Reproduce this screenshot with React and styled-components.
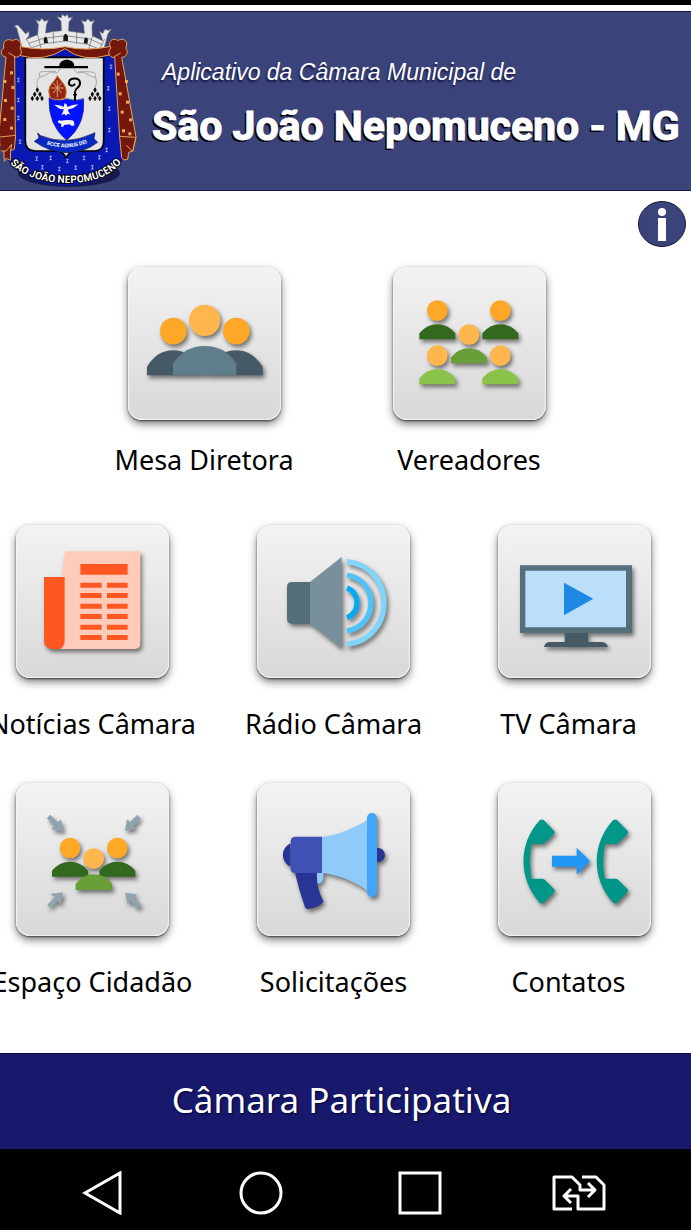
import React from 'react'
import styled, { createGlobalStyle } from 'styled-components'

const GlobalStyle = createGlobalStyle`
  * {
    box-sizing: border-box;
  }

  body {
    margin: 0;
    background: #fff;
    font-family: 'Noto Sans', 'Open Sans', sans-serif;
  }
`

const Screen = styled.div`
  min-height: 100vh;
  display: flex;
  flex-direction: column;
  overflow-x: hidden;
`

const StatusBar = styled.div`
  height: 5px;
  background: #000;
`

const Header = styled.header`
  display: flex;
  align-items: flex-start;
  gap: 12px;
  margin-top: 6px;
  background: #3b437b;
  border-top: 1px solid #14173f;
  border-bottom: 1px solid #14173f;
  overflow: hidden;
`

const CrestSvg = styled.svg`
  flex: none;
  width: 140px;
  height: 178px;
`

const Titles = styled.div`
  padding-top: 46px;
  color: #fff;
  white-space: nowrap;
  font-family: 'Liberation Sans', Arial, sans-serif;
`

const Subtitle = styled.p`
  margin: 0 0 0 10px;
  font-size: 23px;
  line-height: 28px;
  font-style: italic;
  text-shadow: -1px 2px 2px #14173f;
`

const Title = styled.h1`
  margin: 0;
  font-family: Roboto, 'Liberation Sans', sans-serif;
  font-size: 41px;
  line-height: 80px;
  font-weight: 700;
  -webkit-text-stroke: 1px #fff;
  text-shadow: -2px 2px 0 #000;
`

const Main = styled.main`
  flex: 1;
  padding-top: 10px;
`

const InfoButton = styled.button`
  display: block;
  width: 48px;
  height: 46px;
  margin: 0 5px 20px auto;
  padding: 0;
  border: 0;
  background: none;
  cursor: pointer;

  svg {
    display: block;
  }
`

const Label = styled.span`
  font-size: 27px;
  line-height: 36px;
  white-space: nowrap;
`

const Row = styled.div`
  display: flex;
  justify-content: ${({ $top }) => ($top ? 'center' : 'space-between')};
  gap: ${({ $top }) => ($top ? '112px' : '0')};
  padding: ${({ $top }) => ($top ? '0 18px 6px 0' : '0 40px 0 16px')};
  margin-bottom: 41px;

  & > :nth-child(3) ${Label} {
    padding-right: 12px;
  }
`

const Item = styled.button`
  display: flex;
  flex-direction: column;
  align-items: center;
  gap: ${({ $tight }) => ($tight ? '22px' : '28px')};
  width: 153px;
  padding: 0;
  border: 0;
  background: none;
  color: #000;
  font-family: inherit;
  cursor: pointer;
`

const Tile = styled.span`
  display: block;
  width: 153px;
  height: 153px;
  border-radius: 14px;
  background: linear-gradient(#f3f3f3, #d8d8d8);
  box-shadow: inset 0 0 1px 1px #f4f4f4, 0 1px 2px rgba(0, 0, 0, 0.6), 0 4px 8px rgba(0, 0, 0, 0.5);

  svg {
    display: block;
    width: 100%;
    height: 100%;
    filter: drop-shadow(2px 3px 2px rgba(0, 0, 0, 0.5));
  }
`

const Participate = styled.button`
  height: 96px;
  padding: 0 8px 4px 0;
  border: 0;
  border-top: 1px solid #08083a;
  background: #18186d;
  color: #fff;
  font-family: inherit;
  font-size: 35px;
  text-shadow: 1px 1px 2px #000030;
  cursor: pointer;
`

const NavBar = styled.nav`
  display: grid;
  grid-template-columns: repeat(4, 1fr);
  align-items: center;
  height: 81px;
  padding: 6px 32px 0 22px;
  background: #000;
`

const NavButton = styled.button`
  display: grid;
  place-items: center;
  padding: 0;
  border: 0;
  background: none;
  cursor: pointer;

  svg {
    fill: none;
    stroke: #fff;
    stroke-width: 3;
  }
`

const Bust = ({ x, y, head, body }) => (
  <g transform={`translate(${x} ${y})`}>
    <circle cy='31' r='31' fill={head} />
    <path d='M-54 117v-18Q-32 72 0 72t54 27v18z' fill={body} />
  </g>
)

const MesaIcon = () => (
  <svg viewBox='85 50 459 459'>
    <path d='M142 375v-26q30-49 79-49t79 49v26z' fill='#455a64' />
    <path d='M330 375v-26q30-49 79-49t80 49v26z' fill='#455a64' />
    <path d='M220 375v-36q35-52 95-52t95 52v36z' fill='#607d8b' />
    <circle cx='221' cy='242' r='40' fill='#ffa726' />
    <circle cx='410' cy='242' r='40' fill='#ffa726' />
    <circle cx='315' cy='210' r='47' fill='#ffb74d' />
  </svg>
)

const VereadoresIcon = () => (
  <svg viewBox='39 50 459 459'>
    <Bust x={172} y={150} head='#ffa726' body='#33691e' />
    <Bust x={361} y={150} head='#ffa726' body='#33691e' />
    <Bust x={172} y={285} head='#ffb74d' body='#8bc34a' />
    <Bust x={361} y={285} head='#ffb74d' body='#8bc34a' />
    <Bust x={267} y={222} head='#ffb74d' body='#689f38' />
  </svg>
)

const NoticiasIcon = () => (
  <svg viewBox='48 46 459 459'>
    <path d='M195 125h226v276q0 17-17 17H160z' fill='#ffccbc' />
    <path d='M132 202h62v190q0 18-13 26h-27q-22-3-22-24z' fill='#ff5722' />
    <path d='M241 163h142v32H241z' fill='#ff5722' />
    {[219, 250, 282, 313, 345, 376].map(y => (
      <path key={y} d={`M241 ${y}h64v15h-64zM321 ${y}h62v15h-62z`} fill='#ff5722' />
    ))}
  </svg>
)

const RadioIcon = () => (
  <svg viewBox='51 46 459 459'>
    <path d='M210 217h-54q-15 0-15 14v97q0 14 15 14h54z' fill='#546e7a' />
    <path d='M210 217l95-75v274l-95-74z' fill='#78909c' />
    <g fill='none' strokeWidth='16'>
      <path d='M321 235c40 15 40 74 0 89' stroke='#03a9f4' />
      <path d='M321 196c96 18 96 150 0 168' stroke='#4fc3f7' />
      <path d='M321 156c148 18 148 229 0 248' stroke='#81d4fa' />
    </g>
  </svg>
)

const TvIcon = () => (
  <svg viewBox='54 47 459 459'>
    <path d='M254 370h70v28h42q14 1 18 15H192q3-14 15-15h47z' fill='#455a64' />
    <path d='M120 168h336v203H120z' fill='#546e7a' />
    <path d='M136 184h302v170H136' fill='#bbdefb' />
    <path d='M252 220v98l88-50z' fill='#1e88e5' />
  </svg>
)

const EspacoIcon = () => (
  <svg viewBox='48 40 459 459'>
    <Bust x={210} y={204} head='#ffa726' body='#33691e' />
    <Bust x={352} y={204} head='#ffa726' body='#33691e' />
    <path d='M227 361v-19q22-28 54-28t55 28v19z' fill='#689f38' />
    <circle cx='281' cy='267' r='31' fill='#ffb74d' />
    <g fill='#90a4ae'>
      <path d='M150 135l24 23 9-9 7 37-37-8 10-9-22-23z' />
      <path d='M412 135l-22 22-9-9-6 35 34-5-9-9 22-22z' />
      <path d='M142 405l23-23-15-9 39-5-7 36-10-10-22 20z' />
      <path d='M375 369l36 5-9 10 22 22-11 11-22-22-8 9z' />
    </g>
  </svg>
)

const SolicitacoesIcon = () => (
  <svg viewBox='51 40 459 459'>
    <path d='M152 221v70c-31-14-31-56 0-70zM410 234c33 0 33 44 0 44z' fill='#283593' />
    <path d='M230 309h20v17q0 14-18 17z' fill='#90caf9' />
    <path d='M165 309h66q-3 44 19 86-8 19-48 23-5 0-7-5-19-54-30-104z' fill='#283593' />
    <path d='M246 201h-80q-14 0-14 14v83q0 12 14 12h80z' fill='#3f51b5' />
    <path d='M246 201c38 0 102-29 136-50v212c-46-33-98-50-136-53z' fill='#90caf9' />
    <rect x='381' y='130' width='30' height='252' rx='15' fill='#42a5f5' />
  </svg>
)

const handset = 'M191 151c-3-3-9-2-12 1-65 70-65 176 1 248 3 2 8 2 11-1l31-31c3-3 3-7 0-10l-27-27q-4-4-9-4h-31c-7-33-7-71 0-104h31q6 0 9-4l27-26c3-3 3-7 0-10z'

const ContatosIcon = () => (
  <svg viewBox='54 40 459 459'>
    <path d={handset} fill='#009688' />
    <path d={handset} fill='#009688' transform='translate(220 0)' />
    <path d='M216 258h74v-24l40 40-40 41v-24h-74z' fill='#2196f3' />
  </svg>
)

const stars = [
  [55, 240], [55, 300], [55, 354], [60, 425], [110, 476], [152, 474], [127, 502], [178, 507],
  [202, 483], [227, 503], [252, 474], [277, 502], [298, 472], [320, 450], [328, 326], [328, 390], [333, 200], [325, 265]
]

const Crest = () => (
  <CrestSvg viewBox='0 36 420 534' role='img' aria-label='São João Nepomuceno'>
    <defs>
      <path id='ribbon' d='M32 492Q86 546 196 549T363 490' />
    </defs>
    <ellipse cx='207' cy='520' rx='153' ry='40' fill='#171b4c' />
    <g fill='#e8e8e8' stroke='#62656d' strokeWidth='2'>
      <path d='M70 157L50 84l-8-6 11-3 8 8 16 18 10-7v13l-8 11q16-8 34-14l2-31-9-14 12 5 8-9 7 9 12-5-6 18-2 22q21-6 47-7l-1-28-13-14 14 3 2-10 9 6 8-6 3 11 13-3-12 15-1 27 47 7-2-24-7-15 12 4 8-9 8 9 12-5-8 15 1 32 31 15-5-16-5-12 11 6 5-12 11 3 10-4-11 14-20 75z' />
      <path d='M79 117l21 37M113 104l10 40M160 97l1 34M230 96v35M279 104l-13 42M314 117l-20 37M87 130l43-15 67-8 73 10 39 18M95 143l37-12 65-8 66 10 36 15' fill='none' />
    </g>
    <g fill='#17181b'>
      <path d='M190 123v-13q7-17 14 0v13zM132 129l-1-12q6-13 11-1l2 13zM251 129l2-12q7-12 11 2l-2 13z' />
    </g>
    <path d='M47 170l148-24 149 24 39 282q-48 104-177 105Q70 559 18 470z' fill='#0a19b4' stroke='#10184e' strokeWidth='2' />
    <g fill='none' stroke='#dce2ff' strokeWidth='2'>
      {stars.map(([x, y]) => (
        <path key={`${x}-${y}`} d={`M${x - 4} ${y - 5}h8m-4 0v10m-4 0h8`} />
      ))}
    </g>
    <path d='M76 172h235v251q0 29-27 30h-61q-15 2-24 19-11-17-27-19h-65q-31-1-31-30z' fill='#e4e4e4' stroke='#000' strokeWidth='5' />
    <path d='M133 198h45c0-25 45-25 45 0h41v7H133z' />
    <g fill='none' stroke='#a5a5a5' strokeWidth='3'>
      <path d='M179 207c-9 25-23 3-36 7-17 2-30-2-23 17 23-4 25-18 48-17M222 207c12 24 26 3 36 8 19 1 34 1 27 17-23-3-25-17-50-17M120 230c-10 10-10 17-8 32M285 230c6 10 5 18 1 32' />
    </g>
    <g>
      {[112, 285].map(x => (
        <path key={x} d={`M${x} 263l4 7-4 7-4-7zM${x - 8} 276l4 7-4 7-4-7zM${x + 8} 276l4 7-4 7-4-7zM${x - 15} 289l4 6-4 7-4-7zM${x} 289l4 6-4 7-4-7zM${x + 14} 289l4 6-4 7-4-7z`} stroke='#000' strokeWidth='2' />
      ))}
    </g>
    <path d='M147 293q28 14 53 3 25 9 51 0 7 77-51 125-57-48-53-128z' fill='#0012ff' stroke='#34386a' strokeWidth='2' />
    <path d='M151 294c-14-38 9-42 21-67 16 24 35 33 23 68-20 6-32 4-44-1z' fill='#912618' stroke='#d97e3a' strokeWidth='3' />
    <path d='M172 241v51M153 264h38M160 249l24 30M184 249l-24 30' stroke='#e2a064' strokeWidth='3' />
    <path d='M225 304v-28c0-14 17-12 15-28-2-17-30-15-33-2-3 11 13 16 18 5' fill='none' stroke='#000' strokeWidth='6' />
    <path d='M219 284h12' stroke='#000' strokeWidth='4' />
    <path d='M162 314c13 1 24 2 29 7l3-12 7 5 1 7c13-5 19-8 33-7-10 4-12 12-25 12l-7 4 8 14-8-3-5 6-5-6-9 5 8-18c-16 1-20-9-30-14zM173 365q4-6 10-3 18-4 31-1 10-1 9 16h-9l-5-4-17 2-2 5h-7l1-9q-8 0-11-6z' fill='#f2f2f2' />
    <path d='M113 399l9 8q76 31 154-5l9-4-3 18 11 11q-40 31-92 31t-98-34l14-10z' fill='#0829c1' stroke='#111547' strokeWidth='2' />
    <path id='motto' d='M134 431q64 24 134-4' fill='none' />
    <text fill='#fff' fontFamily='Roboto, sans-serif' fontWeight='700' fontSize='16'>
      <textPath href='#motto' startOffset='50%' textAnchor='middle'>ECCE AGNUS DEI</textPath>
    </text>
    <g fill='#74170c' stroke='#e3a45c' strokeWidth='3'>
      <path d='M57 139q72 15 138 1 64 15 138-1l-6 26q-78 24-132-19-61 42-139 20z' />
      <path d='M12 144c-7-19 10-31 25-22 17-11 32 6 23 22 11 16-3 31-16 27l2 235-14 44-1 31-12-6-6 9-2-40q-16-9-9-30L-4 410l22-239c-17-1-18-21-6-27z' />
      <path d='M333 144c-13-19 8-34 20-22 18-13 35 5 24 22 13 16-3 29-12 28l43 239-9 42-13 4-3 21-12 2-6-7-6-62-15-238c-20-1-22-20-11-29z' />
      <path d='M0 411l47-5-4 42-11 4 3-19-17 20-15 0M357 409l50 3-9 42-19-18M46 171L25 158M342 171l20-12' fill='#74170c' />
    </g>
    <g fill='#eda858'>
      {[[30, 214], [10, 240], [34, 258], [12, 297], [32, 320], [10, 354], [30, 380], [350, 218], [375, 240], [356, 277], [378, 302], [362, 332], [387, 355], [366, 388], [385, 397]].map(([x, y]) => (
        <rect key={`${x}-${y}`} x={x} y={y} width='9' height='9' />
      ))}
    </g>
    <text fill='#fff' stroke='#000' strokeWidth='6' paintOrder='stroke' fontFamily='Roboto, sans-serif' fontWeight='700' fontSize='31'>
      <textPath href='#ribbon' startOffset='50%' textAnchor='middle'>SÃO JOÃO NEPOMUCENO</textPath>
    </text>
  </CrestSvg>
)

const topItems = [
  { label: 'Mesa Diretora', Icon: MesaIcon },
  { label: 'Vereadores', Icon: VereadoresIcon }
]

const rows = [
  [
    { label: 'Notícias Câmara', Icon: NoticiasIcon },
    { label: 'Rádio Câmara', Icon: RadioIcon },
    { label: 'TV Câmara', Icon: TvIcon }
  ],
  [
    { label: 'Espaço Cidadão', Icon: EspacoIcon },
    { label: 'Solicitações', Icon: SolicitacoesIcon },
    { label: 'Contatos', Icon: ContatosIcon }
  ]
]

const MenuItem = ({ label, Icon, tight }) => (
  <Item type='button' $tight={tight}>
    <Tile><Icon /></Tile>
    <Label>{label}</Label>
  </Item>
)

const App = () => {
  return (
    <Screen>
      <GlobalStyle />
      <StatusBar />
      <Header>
        <Crest />
        <Titles>
          <Subtitle>Aplicativo da Câmara Municipal de</Subtitle>
          <Title>São João Nepomuceno - MG</Title>
        </Titles>
      </Header>
      <Main>
        <InfoButton type='button' aria-label='Informações'>
          <svg width='48' height='46' viewBox='0 0 48 46'>
            <ellipse cx='24' cy='23' rx='23.5' ry='22.5' fill='#3b437b' stroke='#14173f' />
            <circle cx='24' cy='11' r='4' fill='#fff' />
            <path d='M20 17h8v23h-8z' fill='#fff' />
          </svg>
        </InfoButton>
        <Row $top>
          {topItems.map(item => <MenuItem key={item.label} {...item} tight />)}
        </Row>
        {rows.map((items, i) => (
          <Row key={i}>
            {items.map(item => <MenuItem key={item.label} {...item} />)}
          </Row>
        ))}
      </Main>
      <Participate type='button'>Câmara Participativa</Participate>
      <NavBar>
        <NavButton type='button' aria-label='Voltar'>
          <svg width='40' height='44' viewBox='0 0 40 44'><path d='M38 2v40L3 22z' /></svg>
        </NavButton>
        <NavButton type='button' aria-label='Início'>
          <svg width='44' height='44' viewBox='0 0 44 44'><circle cx='22' cy='22' r='20' /></svg>
        </NavButton>
        <NavButton type='button' aria-label='Recentes'>
          <svg width='44' height='44' viewBox='0 0 44 44'><path d='M2 2h40v40H2z' /></svg>
        </NavButton>
        <NavButton type='button' aria-label='Trocar chip'>
          <svg width='54' height='44' viewBox='0 0 54 44' strokeLinejoin='round'>
            <path d='M20 38H2V6h18l8 8v5h14M36 12l7 7-7 7M30 6h14l8 8v24H26V25H12M19 18l-7 7 7 7' />
          </svg>
        </NavButton>
      </NavBar>
    </Screen>
  )
}

export default App
